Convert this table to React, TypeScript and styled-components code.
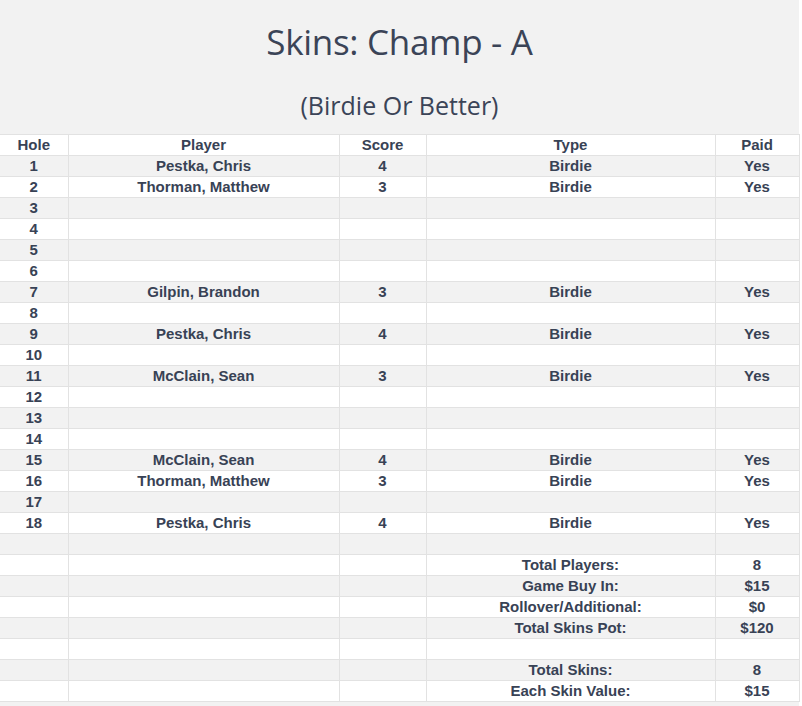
import React from "react";
import styled, { createGlobalStyle } from "styled-components";

const Global = createGlobalStyle`
  html, body { margin: 0; padding: 0; background: #ffffff; }
  body { font-family: "Liberation Sans", Arial, sans-serif; color: #3b4457; }
`;

const Page = styled.div`
  width: 799px;
  background: #f2f2f2;
  padding-bottom: 4px;
`;

const Header = styled.header`
  display: flex;
  flex-direction: column;
  align-items: center;
  height: 134px;
`;

const Title = styled.h1`
  margin: 20px 0 0;
  font-family: "Open Sans", "Noto Sans", sans-serif;
  font-weight: 400;
  font-size: 35px;
  line-height: 44px;
  color: #3b4457;
  letter-spacing: -0.3px;
`;

const Subtitle = styled.h2`
  margin: 25px 0 0;
  font-family: "Open Sans", "Noto Sans", sans-serif;
  font-weight: 400;
  font-size: 25px;
  line-height: 32px;
  color: #3b4457;
`;

const Table = styled.table`
  width: 799px;
  border-collapse: collapse;
  table-layout: fixed;
  font-family: "Liberation Sans", Arial, sans-serif;
  font-weight: 700;
  font-size: 15px;
  color: #384255;
`;

const Row = styled.tr<{ $shade: boolean }>`
  background: ${(p) => (p.$shade ? "#f2f2f2" : "#ffffff")};
  height: 21px;
`;

const Cell = styled.td`
  border: 1px solid #e2e2e2;
  border-left: none;
  padding: 0;
  height: 20px;
  line-height: 20px;
  text-align: center;
  white-space: nowrap;
  overflow: hidden;
`;

const HeadCell = styled(Cell).attrs({ as: "th" })``;

type Skin = { hole: number; player?: string; score?: number; type?: string; paid?: string };

const skins: Skin[] = [
  { hole: 1, player: "Pestka, Chris", score: 4, type: "Birdie", paid: "Yes" },
  { hole: 2, player: "Thorman, Matthew", score: 3, type: "Birdie", paid: "Yes" },
  { hole: 3 },
  { hole: 4 },
  { hole: 5 },
  { hole: 6 },
  { hole: 7, player: "Gilpin, Brandon", score: 3, type: "Birdie", paid: "Yes" },
  { hole: 8 },
  { hole: 9, player: "Pestka, Chris", score: 4, type: "Birdie", paid: "Yes" },
  { hole: 10 },
  { hole: 11, player: "McClain, Sean", score: 3, type: "Birdie", paid: "Yes" },
  { hole: 12 },
  { hole: 13 },
  { hole: 14 },
  { hole: 15, player: "McClain, Sean", score: 4, type: "Birdie", paid: "Yes" },
  { hole: 16, player: "Thorman, Matthew", score: 3, type: "Birdie", paid: "Yes" },
  { hole: 17 },
  { hole: 18, player: "Pestka, Chris", score: 4, type: "Birdie", paid: "Yes" },
];

const summary: ([string, string] | null)[] = [
  null,
  ["Total Players:", "8"],
  ["Game Buy In:", "$15"],
  ["Rollover/Additional:", "$0"],
  ["Total Skins Pot:", "$120"],
  null,
  ["Total Skins:", "8"],
  ["Each Skin Value:", "$15"],
];

export default function App() {
  return (
    <>
      <Global />
      <Page>
        <Header>
          <Title>Skins: Champ - A</Title>
          <Subtitle>(Birdie Or Better)</Subtitle>
        </Header>
        <Table>
          <colgroup>
            <col style={{ width: 68 }} />
            <col style={{ width: 271 }} />
            <col style={{ width: 87 }} />
            <col style={{ width: 289 }} />
            <col style={{ width: 84 }} />
          </colgroup>
          <thead>
            <Row $shade={false}>
              <HeadCell>Hole</HeadCell>
              <HeadCell>Player</HeadCell>
              <HeadCell>Score</HeadCell>
              <HeadCell>Type</HeadCell>
              <HeadCell>Paid</HeadCell>
            </Row>
          </thead>
          <tbody>
            {skins.map((s, i) => (
              <Row key={s.hole} $shade={i % 2 === 0}>
                <Cell>{s.hole}</Cell>
                <Cell>{s.player ?? ""}</Cell>
                <Cell>{s.score ?? ""}</Cell>
                <Cell>{s.type ?? ""}</Cell>
                <Cell>{s.paid ?? ""}</Cell>
              </Row>
            ))}
            {summary.map((r, i) => (
              <Row key={"s" + i} $shade={i % 2 === 0}>
                <Cell />
                <Cell />
                <Cell />
                <Cell>{r ? r[0] : ""}</Cell>
                <Cell>{r ? r[1] : ""}</Cell>
              </Row>
            ))}
          </tbody>
        </Table>
      </Page>
    </>
  );
}
